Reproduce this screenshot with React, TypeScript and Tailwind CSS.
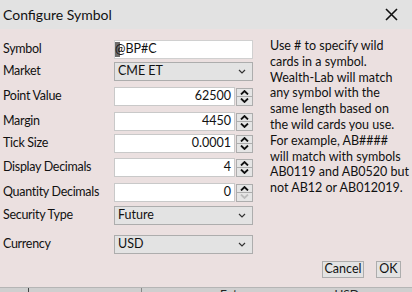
import { ReactNode } from 'react';

const font = { fontFamily: 'Lato, "Noto Sans", sans-serif' };

function Chevron() {
  return (
    <svg width="8" height="5" viewBox="0 0 8 5" className="text-[#333]">
      <path d="M1 1 L4 4 L7 1" fill="none" stroke="currentColor" strokeWidth="1.2" />
    </svg>
  );
}

function Spinner({ downDisabled }: { downDisabled?: boolean }) {
  return (
    <div className="flex flex-col w-[17px] h-[18px] ml-[1px]">
      <div className="flex-1 flex items-center justify-center bg-[#e5e5e5] border border-[#adadad]">
        <svg width="9" height="5" viewBox="0 0 9 5">
          <path d="M1 4.5 L4.5 1 L8 4.5" fill="none" stroke="#111" strokeWidth="1.8" />
        </svg>
      </div>
      <div className="flex-1 flex items-center justify-center bg-[#e5e5e5] border border-t-0 border-[#adadad]">
        <svg width="9" height="5" viewBox="0 0 9 5">
          <path d="M1 0.5 L4.5 4 L8 0.5" fill="none" stroke={downDisabled ? '#bdbdbd' : '#111'} strokeWidth="1.8" />
        </svg>
      </div>
    </div>
  );
}

function Row({ label, className, children }: { label: string; className: string; children: ReactNode }) {
  return (
    <div className={`flex items-center h-[19px] ${className}`}>
      <div className="w-[114px] pl-[3px] text-[12.5px] tracking-[-0.3px] text-[#111]">{label}</div>
      <div className="w-[139px] h-full">{children}</div>
    </div>
  );
}

function Select({ value }: { value: string }) {
  return (
    <div className="h-full flex items-center justify-between bg-[#e3e3e3] border border-[#adadad] pl-[3px] pr-[6px] text-[12.5px] text-[#111]">
      <span>{value}</span>
      <Chevron />
    </div>
  );
}

function NumberBox({ value, downDisabled }: { value: string; downDisabled?: boolean }) {
  return (
    <div className="h-full flex items-center">
      <div className="flex-1 h-full flex items-center justify-end bg-white border border-[#c9c9c9] pr-[3px] text-[12.5px] text-[#111]">
        {value}
      </div>
      <Spinner downDisabled={downDisabled} />
    </div>
  );
}

const helpLines = [
  'Use # to specify wild',
  'cards in a symbol.',
  'Wealth-Lab will match',
  'any symbol with the',
  'same length based on',
  'the wild cards you use.',
  'For example, AB####',
  'will match with symbols',
  'AB0119 and AB0520 but',
  'not AB12 or AB012019.',
];

export default function App() {
  return (
    <div className="w-[412px] h-[292px] flex flex-col bg-[#ebe0e0] overflow-hidden" style={font}>
      {/* Title bar */}
      <div className="h-[29px] flex items-center justify-between bg-[#e2e2e2] pl-[3px] pr-[14px]">
        <span className="text-[14px] text-[#111]">Configure Symbol</span>
        <svg width="13" height="13" viewBox="0 0 13 13">
          <path d="M1 1 L12 12 M12 1 L1 12" stroke="#111" strokeWidth="1.6" />
        </svg>
      </div>

      <div className="flex-1 flex">
        {/* Form */}
        <div className="w-[253px] shrink-0 flex flex-col pt-[11px]">
          <Row label="Symbol" className="">
            <div className="h-full flex items-center bg-white border border-[#d0d0d0] text-[12.5px] text-[#111]">
              <span className="bg-[#6d6d6d] w-[5px] h-[15px] -mr-[5px]" />
              <span>@BP#C</span>
            </div>
          </Row>
          <Row label="Market" className="mt-[3px]">
            <Select value="CME ET" />
          </Row>
          <Row label="Point Value" className="mt-[6px]">
            <NumberBox value="62500" />
          </Row>
          <Row label="Margin" className="mt-[6px]">
            <NumberBox value="4450" />
          </Row>
          <Row label="Tick Size" className="mt-[3px]">
            <NumberBox value="0.0001" />
          </Row>
          <Row label="Display Decimals" className="mt-[5px]">
            <NumberBox value="4" />
          </Row>
          <Row label="Quantity Decimals" className="mt-[6px]">
            <NumberBox value="0" downDisabled />
          </Row>
          <Row label="Security Type" className="mt-[4px]">
            <Select value="Future" />
          </Row>
          <Row label="Currency" className="mt-[10px]">
            <Select value="USD" />
          </Row>
        </div>

        {/* Help text + buttons */}
        <div className="w-[159px] min-w-0 shrink-0 flex flex-col pl-[17px] pr-[11px]">
          <p className="pt-[9px] text-[12.5px] leading-[15.8px] text-[#111] whitespace-nowrap">
            {helpLines.map((line) => (
              <span key={line} className="block">
                {line}
              </span>
            ))}
          </p>
          <div className="mt-auto mb-[9px] flex justify-end gap-[12px]">
            <button className="h-[17px] w-[42px] flex items-center justify-center bg-[#e3e3e3] border border-[#adadad] text-[12.5px] text-[#111]">
              Cancel
            </button>
            <button className="h-[17px] w-[25px] flex items-center justify-center bg-[#e3e3e3] border border-[#adadad] text-[12.5px] text-[#111]">
              OK
            </button>
          </div>
        </div>
      </div>

      {/* Window behind, peeking at the bottom */}
      <div className="h-[5px] border-t border-[#b5b5b5] bg-[#cfcfcf] overflow-hidden flex text-[12px] leading-[12px] text-[#222]">
        <div className="w-[29px] border-r border-[#444]" />
        <div className="w-[113px] border-r border-[#888]" />
        <div className="w-[78px]" />
        <span>Future</span>
        <span className="ml-[80px]">USD</span>
      </div>
    </div>
  );
}
